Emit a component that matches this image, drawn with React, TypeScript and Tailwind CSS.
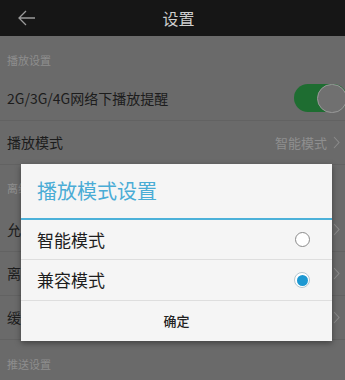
const font = { fontFamily: '"Noto Sans CJK SC", "Noto Sans", sans-serif' };

function Label({ text, pad }: { text: string; pad: string }) {
  return (
    <div className={`flex items-center px-[7px] text-[11px] text-[#8e8e8e] ${pad}`}>
      {text}
    </div>
  );
}

function Row({ text, value, h = "h-[44px]" }: { text: string; value?: string; h?: string }) {
  return (
    <div className={`flex items-center justify-between border-b border-[#626262] pl-[7px] pr-[5px] ${h}`}>
      <span className="text-[14px] text-[#1c1c1c]">{text}</span>
      <span className="flex items-center text-[13px] text-[#8f8f8f]">
        {value}
        <svg className="ml-[6px]" width="7" height="13" viewBox="0 0 7 13" fill="none">
          <path d="M1 1l5 5.5L1 12" stroke="#8a8a8a" strokeWidth="1.1" />
        </svg>
      </span>
    </div>
  );
}

export default function App() {
  return (
    <main className="relative h-[380px] w-[345px] overflow-hidden bg-[#6a6a6a]" style={font}>
      <header className="relative flex h-[36px] items-center justify-center bg-[#161616] pl-[12px]">
        <svg className="absolute left-[17px] top-[9px]" width="19" height="18" viewBox="0 0 19 18" fill="none">
          <path d="M18 9H2M9 2L2 9l7 7" stroke="#9a9a9a" strokeWidth="1.3" />
        </svg>
        <span className="text-[16px] text-[#cfcfcf]">设置</span>
      </header>

      <Label text="播放设置" pad="h-[40px] pt-[8px]" />
      <div className="flex h-[45px] items-center justify-between overflow-hidden border-b border-[#626262] pl-[7px]">
        <span className="text-[14px] text-[#1c1c1c]">2G/3G/4G网络下播放提醒</span>
        <div className="-mr-[2px] flex h-[28px] w-[53px] shrink-0 items-center justify-end rounded-full bg-[#1e6d31]">
          <div className="h-[29px] w-[30px] rounded-full border border-[#9a9a9a] bg-[#707070]" />
        </div>
      </div>
      <Row text="播放模式" value="智能模式" />
      <Label text="离线设置" pad="h-[43px] pt-[4px]" />
      <Row text="允许使用移动网络下载" />
      <Row text="离线文件存储位置" />
      <Row text="缓存设置" />
      <Label text="推送设置" pad="h-[40px] pt-[8px]" />

      <div className="absolute left-[21px] top-[164px] w-[311px] bg-[#f5f5f5] shadow-[0_2px_6px_rgba(0,0,0,0.4)]">
        <div className="flex h-[54px] items-center pl-[16px] text-[20px] text-[#4aacd5]">播放模式设置</div>
        <div className="h-[2px] bg-[#4cb1d9]" />
        <div className="flex h-[40px] items-center justify-between border-b border-[#dedede] pl-[16px] pr-[22px]">
          <span className="text-[17px] text-[#1e1e1e]">智能模式</span>
          <span className="h-[15px] w-[15px] rounded-full border border-[#8a8a8a] bg-white" />
        </div>
        <div className="flex h-[41px] items-center justify-between border-b border-[#dedede] pl-[16px] pr-[22px]">
          <span className="text-[17px] text-[#1e1e1e]">兼容模式</span>
          <span className="flex h-[16px] w-[16px] items-center justify-center rounded-full border border-[#b5c7cf] bg-white">
            <span className="h-[11px] w-[11px] rounded-full bg-[#1c98d2]" />
          </span>
        </div>
        <div className="flex h-[40px] items-center justify-center text-[13px] font-medium text-[#222]">确定</div>
      </div>
    </main>
  );
}
